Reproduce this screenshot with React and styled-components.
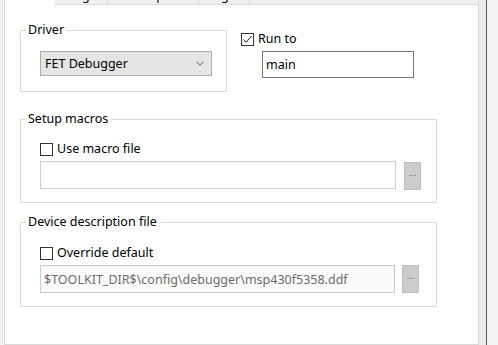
import React from "react";
import styled, { createGlobalStyle } from "styled-components";

const Global = createGlobalStyle`
  html, body { margin: 0; padding: 0; background: #f0f0f0; }
  body { font-family: "Noto Sans", "Open Sans", sans-serif; font-size: 12.5px; color: #000; }
`;

const Page = styled.div`
  display: flex;
  width: 498px;
  height: 345px;
  padding-left: 4px;
  box-sizing: border-box;
  overflow: hidden;
  background: #f0f0f0;
`;

const TabControl = styled.div`
  display: flex;
  flex-direction: column;
  width: 475px;
  height: 345px;
`;

const TabStrip = styled.div`
  display: flex;
  height: 5px;
  flex: none;
`;

const Tab = styled.div`
  box-sizing: border-box;
  width: ${(p) => p.$w}px;
  height: 5px;
  overflow: hidden;
  display: flex;
  justify-content: center;
  align-items: flex-end;
  background: ${(p) => (p.$active ? "#fff" : "#f0f0f0")};
  border-left: ${(p) => (p.$active ? "1px solid #d9d9d9" : "none")};
  border-right: ${(p) => (p.$active ? "none" : "1px solid #d9d9d9")};
  border-bottom: ${(p) => (p.$active ? "none" : "1px solid #d9d9d9")};
`;

const TabLabel = styled.span`
  flex: none;
  line-height: 13px;
  font-size: 12.5px;
  margin-bottom: 2px;
  white-space: nowrap;
`;

const TabFiller = styled.div`
  flex: 1;
  border-bottom: 1px solid #d9d9d9;
  border-right: 1px solid #d9d9d9;
  background: #f0f0f0;
`;

const Panel = styled.div`
  flex: 1;
  background: #fff;
  border: 1px solid #d9d9d9;
  border-top: none;
  padding: 17px 0 0 15px;
  box-sizing: border-box;
  display: flex;
  flex-direction: column;
`;

const TopRow = styled.div`
  display: flex;
  align-items: flex-start;
  gap: 14px;
`;

const Group = styled.fieldset`
  margin: ${(p) => p.$mt || 0}px 0 0 0;
  width: ${(p) => p.$w}px;
  box-sizing: border-box;
  border: 1px solid #dcdcdc;
  padding: ${(p) => p.$pt}px ${(p) => p.$pr || 12}px ${(p) => p.$pb}px 19px;
  min-width: 0;
`;

const Legend = styled.legend`
  padding: 0 2px;
  margin-left: -14px;
  line-height: 16px;
  font-size: 12.5px;
  color: #000;
`;

const Select = styled.div`
  box-sizing: border-box;
  width: 172px;
  height: 25px;
  background: #e5e5e5;
  border: 1px solid #adadad;
  display: flex;
  align-items: center;
  justify-content: space-between;
  padding: 0 7px 0 4px;
  font-size: 12.5px;
`;

const RunCol = styled.div`
  display: flex;
  flex-direction: column;
  padding-top: 9px;
`;

const CheckRow = styled.label`
  display: flex;
  align-items: center;
  gap: 4px;
  line-height: 16px;
  font-size: 12.5px;
  color: #000;
`;

const Box = styled.span`
  box-sizing: border-box;
  width: 13px;
  height: 13px;
  border: 1px solid #333;
  background: #fff;
  display: inline-flex;
  align-items: center;
  justify-content: center;
`;

const TextInput = styled.div`
  box-sizing: border-box;
  width: ${(p) => p.$w}px;
  height: ${(p) => p.$h}px;
  margin-left: ${(p) => p.$ml || 0}px;
  margin-top: ${(p) => p.$mt || 0}px;
  border: 1px solid ${(p) => (p.$dark ? "#7a7a7a" : "#cccccc")};
  background: ${(p) => (p.$muted ? "#fafafa" : "#fff")};
  color: ${(p) => (p.$muted ? "#6d6d6d" : "#000")};
  display: flex;
  align-items: center;
  padding-left: 3px;
  font-size: 12.5px;
  white-space: nowrap;
  overflow: hidden;
`;

const FileRow = styled.div`
  display: flex;
  align-items: flex-start;
  gap: ${(p) => p.$gap}px;
  margin-top: 4px;
`;

const Browse = styled.div`
  box-sizing: border-box;
  width: 17px;
  height: 28px;
  margin-top: ${(p) => p.$mt || 0}px;
  background: #cccccc;
  border: 1px solid #bfbfbf;
  display: flex;
  align-items: center;
  justify-content: center;
  padding-bottom: 4px;
  font-family: "DejaVu Sans", sans-serif;
  font-size: 8px;
  line-height: 10px;
  color: #555;
  letter-spacing: 0;
`;

const RightEdge = styled.div`
  display: flex;
  flex: none;
  width: 19px;
`;

const Gutter = styled.div`
  width: 7px;
  background: #eaeaea;
`;

const Divider = styled.div`
  width: 1px;
  background: #555;
`;

const Rest = styled.div`
  flex: 1;
  background: #f3f3f3;
`;

const Check = ({ checked }) => (
  <Box>
    {checked && (
      <svg width="11" height="11" viewBox="0 0 11 11">
        <path d="M1.5 5.5 L4.2 8.2 L9.5 2.2" fill="none" stroke="#222" strokeWidth="1" />
      </svg>
    )}
  </Box>
);

const Chevron = () => (
  <svg width="8" height="5" viewBox="0 0 8 5">
    <path d="M0.5 0.8 L4 4.2 L7.5 0.8" fill="none" stroke="#555" strokeWidth="1" />
  </svg>
);

export default function App() {
  return (
    <>
      <Global />
      <Page>
        <TabControl>
          <TabStrip>
            <Tab $active $w={51} />
            <Tab $w={53}>
              <TabLabel>Images</TabLabel>
            </Tab>
            <Tab $w={91}>
              <TabLabel>Extra Options</TabLabel>
            </Tab>
            <Tab $w={51}>
              <TabLabel>Plugins</TabLabel>
            </Tab>
            <TabFiller />
          </TabStrip>
          <Panel>
            <TopRow>
              <Group $w={207} $pt={13} $pb={15}>
                <Legend>Driver</Legend>
                <Select>
                  <span>FET Debugger</span>
                  <Chevron />
                </Select>
              </Group>
              <RunCol>
                <CheckRow>
                  <Check checked />
                  Run to
                </CheckRow>
                <TextInput $dark $w={152} $h={27} $ml={21} $mt={4}>
                  main
                </TextInput>
              </RunCol>
            </TopRow>
            <Group $w={417} $mt={19} $pt={14} $pb={12}>
              <Legend>Setup macros</Legend>
              <CheckRow>
                <Check />
                Use macro file
              </CheckRow>
              <FileRow $gap={8}>
                <TextInput $w={356} $h={28} />
                <Browse $mt={1}>...</Browse>
              </FileRow>
            </Group>
            <Group $w={417} $mt={11} $pt={15} $pb={13}>
              <Legend>Device description file</Legend>
              <CheckRow>
                <Check />
                Override default
              </CheckRow>
              <FileRow $gap={7}>
                <TextInput $muted $w={355} $h={28}>
                  $TOOLKIT_DIR$\config\debugger\msp430f5358.ddf
                </TextInput>
                <Browse>...</Browse>
              </FileRow>
            </Group>
          </Panel>
        </TabControl>
        <RightEdge>
          <Gutter />
          <Divider />
          <Rest />
        </RightEdge>
      </Page>
    </>
  );
}
